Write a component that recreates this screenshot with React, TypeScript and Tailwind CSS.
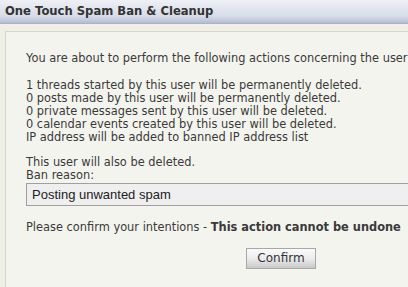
export default function App() {
  return (
    <div className="w-[408px] h-[287px] overflow-hidden bg-[#efefe8] text-[#3a3a3a] font-['DejaVu_Sans',Verdana,sans-serif]">
      <div className="h-[24px] flex items-center px-[5px] bg-gradient-to-b from-[#eef0f5] via-[#d7dce8] via-70% to-[#b4bdd1] border-b border-[#aab3c8]">
        <h1 className="text-[11.6px] font-bold text-[#333] whitespace-nowrap">One Touch Spam Ban &amp; Cleanup</h1>
      </div>
      <div className="mt-[7px] ml-[5px] h-[260px] border-l border-t border-[#d6d6ca] bg-[#f4f4ee] pl-[20px] pt-[20px] text-[11.4px] leading-[13px] whitespace-nowrap">
        <p>You are about to perform the following actions concerning the user</p>
        <div className="mt-[14px]">
          <p>1 threads started by this user will be permanently deleted.</p>
          <p>0 posts made by this user will be permanently deleted.</p>
          <p>0 private messages sent by this user will be deleted.</p>
          <p>0 calendar events created by this user will be deleted.</p>
          <p>IP address will be added to banned IP address list</p>
        </div>
        <p className="mt-[12px]">This user will also be deleted.</p>
        <label className="block">Ban reason:</label>
        <input
          type="text"
          defaultValue="Posting unwanted spam"
          className="mt-[1px] block w-[400px] h-[23px] border border-[#a0a0a0] bg-[#efefef] px-[5px] text-[13px] text-[#222] font-['Liberation_Sans',Arial,sans-serif] outline-none"
        />
        <p className="mt-[15px]">
          Please confirm your intentions - <strong className="font-bold">This action cannot be undone</strong>
        </p>
        <div className="mt-[14px] pl-[220px]">
          <button className="w-[70px] h-[21px] border border-[#a8a8a8] bg-gradient-to-b from-[#fafafa] via-[#ececec] to-[#c9c9c9] text-[12px] text-[#333]">
            Confirm
          </button>
        </div>
      </div>
    </div>
  );
}
